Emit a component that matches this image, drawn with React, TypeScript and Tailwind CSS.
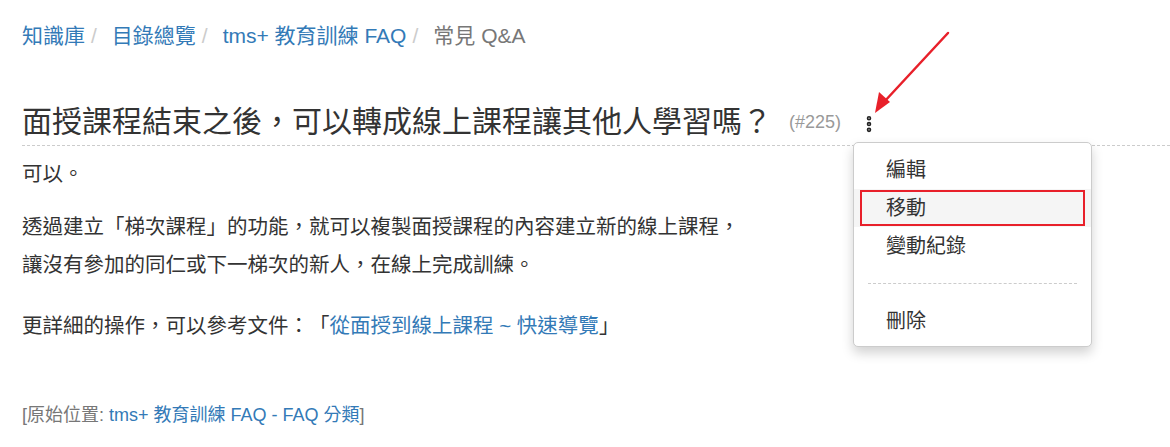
import { EllipsisVertical } from "lucide-react";

const font = "font-['Liberation_Sans','Noto_Sans_CJK_TC',sans-serif] [text-spacing-trim:space-all]";

const Sep = () => <span className="ml-[6px] mr-[15px] text-[#ccc]">/</span>;

const App = () => {
  return (
    <div className={`${font} relative w-[1170px] h-[447px] overflow-hidden bg-white text-[#333]`}>
      {/* breadcrumb */}
      <div className="flex items-center pl-[22px] pt-[20px] text-[21px] leading-[32px]">
        <a className="text-[#337ab7]">知識庫</a>
        <Sep />
        <a className="text-[#337ab7]">目錄總覽</a>
        <Sep />
        <a className="text-[#337ab7]">tms+ 教育訓練 FAQ</a>
        <Sep />
        <span className="text-[#777]">常見 Q&amp;A</span>
      </div>

      {/* title */}
      <div className="ml-[22px] mt-[50px] flex items-end border-b border-dashed border-[#ccc] pb-[3px]">
        <h1 className="text-[30px] leading-[40px] font-normal">面授課程結束之後，可以轉成線上課程讓其他人學習嗎？</h1>
        <span className="ml-[17px] mb-[6px] text-[18px] text-[#999]">(#225)</span>
        <div className="relative ml-[18px] mb-[8px]">
          <EllipsisVertical className="w-[20px] h-[20px] text-[#222]" strokeWidth={3.5} />
          <div className="absolute left-[-6px] top-[28px] w-[239px] rounded-[5px] border border-[#ccc] bg-white pt-[8px] pb-[6px] shadow-[0_6px_12px_rgba(0,0,0,0.18)] text-[20px] leading-[38px] z-10">
            <div className="px-[32px]">編輯</div>
            <div className="relative bg-[#f5f5f5] px-[32px]">
              移動
              <div className="absolute left-[6px] right-[6px] top-[1px] bottom-[1px] border-2 border-[#e8202a]" />
            </div>
            <div className="px-[32px]">變動紀錄</div>
            <div className="mx-[14px] my-[18px] border-t border-dashed border-[#ccc]" />
            <div className="px-[32px]">刪除</div>
          </div>
        </div>
      </div>

      {/* body */}
      <div className="pl-[22px] pt-[9px] text-[20.5px] leading-[38px]">
        <p>可以。</p>
        <p className="mt-[15px]">
          透過建立「梯次課程」的功能，就可以複製面授課程的內容建立新的線上課程，
          <br />
          讓沒有參加的同仁或下一梯次的新人，在線上完成訓練。
        </p>
        <p className="mt-[23px]">
          更詳細的操作，可以參考文件：「<a className="text-[#337ab7]">從面授到線上課程 ~ 快速導覽</a>」
        </p>
        <p className="mt-[51px] text-[18px] text-[#777]">
          [原始位置: <a className="text-[#337ab7]">tms+ 教育訓練 FAQ - FAQ 分類</a>]
        </p>
      </div>

      {/* annotation arrow */}
      <svg className="absolute left-0 top-0 pointer-events-none" width="1170" height="447">
        <line x1="948" y1="33" x2="884" y2="102" stroke="#e8202a" strokeWidth="2.5" strokeLinecap="round" />
        <polygon points="875,113 879,92 890,102" fill="#e8202a" />
      </svg>
    </div>
  );
};

export default App;
